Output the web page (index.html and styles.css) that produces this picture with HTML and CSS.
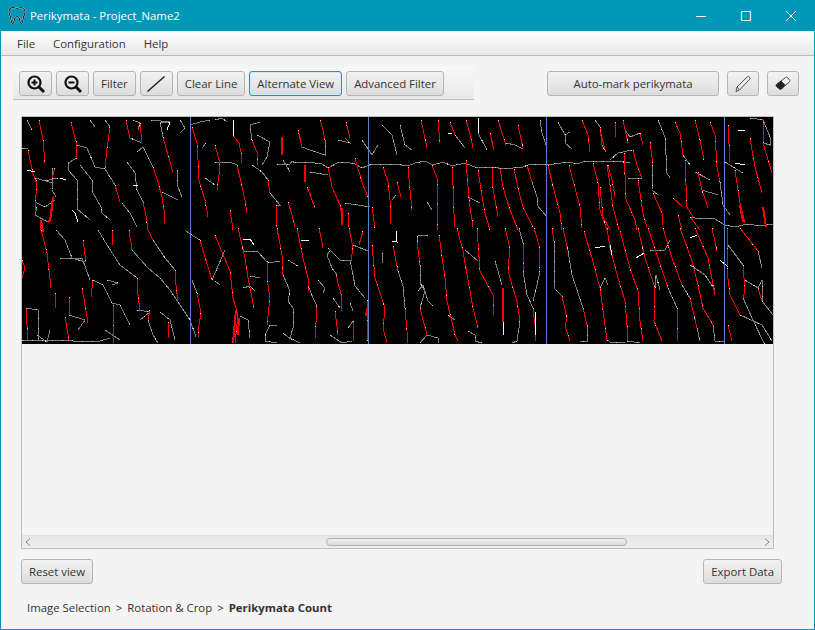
FILE: index.html
```html
<!doctype html>
<html lang="en">
  <head>
    <meta charset="UTF-8" />
    <title>Perikymata - Project_Name2</title>
    <link rel="stylesheet" href="styles.css">
  </head>
  <body>
    <div class="window">
      <header class="titlebar">
        <svg class="tooth" width="18" height="19" viewBox="0 0 18 19">
          <path d="M5 1.500C2.500 1.500 1 3.500 1 6c0 2.500 1.300 3.500 1.700 6 .4 2.500.8 5.500 2 5.500 1.500 0 1.300-2.500 1.800-4.500.4-1.500 1-2.500 2.500-2.500s2.100 1 2.500 2.500c.5 2 .3 4.500 1.800 4.500 1.200 0 1.600-3 2-5.500.4-2.500 1.700-3.500 1.700-6 0-2.500-1.500-4.500-4-4.500-1.600 0-2.600.9-4 .9S6.600 1.500 5 1.500z" />
        </svg>
        <span class="title">Perikymata - Project_Name2</span>
        <div class="controls">
          <div class="control"><svg width="12" height="12" viewBox="0 0 12 12"><path d="M1 6.500h10" /></svg></div>
          <div class="control"><svg width="12" height="12" viewBox="0 0 12 12"><path d="M1.500 1.500h9v9h-9z" /></svg></div>
          <div class="control"><svg width="12" height="12" viewBox="0 0 12 12"><path d="M1 1l10 10M11 1L1 11" /></svg></div>
        </div>
      </header>

      <nav class="menubar">
        <span class="menu">File</span>
        <span class="menu">Configuration</span>
        <span class="menu">Help</span>
      </nav>

      <section class="tools">
        <div class="toolbar">
          <button class="btn btn-icon">
            <svg class="glass" width="20" height="20" viewBox="0 0 20 20">
              <circle cx="8.500" cy="8.500" r="6" />
              <path class="handle" d="M13 13l5 5" />
              <path class="sign" d="M5.500 8.500h6M8.500 5.500v6" />
            </svg>
          </button>
          <button class="btn btn-icon">
            <svg class="glass" width="20" height="20" viewBox="0 0 20 20">
              <circle cx="8.500" cy="8.500" r="6" />
              <path class="handle" d="M13 13l5 5" />
              <path class="sign" d="M5.500 8.500h6" />
            </svg>
          </button>
          <button class="btn">Filter</button>
          <button class="btn btn-icon">
            <svg class="line-icon" width="20" height="18" viewBox="0 0 20 18"><path d="M1.500 16.500L18.500 1.500" /></svg>
          </button>
          <button class="btn">Clear Line</button>
          <button class="btn btn-focus">Alternate View</button>
          <button class="btn">Advanced Filter</button>
        </div>
        <div class="marking">
          <button class="btn btn-wide">Auto-mark perikymata</button>
          <button class="btn btn-tool">
            <svg class="pen" width="18" height="18" viewBox="0 0 18 18">
              <path d="M2 16.500l1-4.500L13 2c.8-.8 2-.8 2.500 0s.8 1.700 0 2.500L5.500 15z" />
              <path d="M3 12l2.500 3" />
            </svg>
          </button>
          <button class="btn btn-tool">
            <svg width="18" height="18" viewBox="0 0 18 18">
              <path class="rubber-top" d="M7 6l4.500-3.500c.7-.5 1.500-.5 2 0l2 2.500c.5.600.4 1.400-.2 1.900L11 10.500z" />
              <path class="rubber-low" d="M7 6l4 4.500L7.500 14c-.6.500-1.400.5-2 0L2.500 11.500c-.6-.6-.6-1.400 0-2z" />
            </svg>
          </button>
        </div>
      </section>

      <section class="viewer">
        <svg class="tracing" width="751" height="227" viewBox="22 117 751 227">
          <rect x="22" y="117" width="751" height="227" fill="#000" />
          <!-- filtered lines -->
          <g class="gray">
            <path id="gray-lines" d="
              M77 145 87 148 95 167 105 169 115 185
              M77 158 68 163 68 170 77 180 78 210 82 213 90 220
              M80 165 92 180 93 193 101 207 102 213 110 220
              M122 203 130 213 137 227
              M127 162 135 173 137 190 143 202
              M142 143 130 138
              M137 152 143 147 153 167
              M162 192 172 197 178 200
              M177 170 178 187 182 197
              M27 120 32 130
              M35 178 46 181 52 183
              M35 202 45 207 55 200
              M22 148 28 149
              M53 168 52 190 56 197
              M37 207 35 215 48 222
              M58 178 44 181
              M90 120 95 127
              M105 120 110 127
              M133 120 140 123 138 130
              M151 120 170 122 160 122 163 137
              M180 120 185 128 180 133
              M190 125 200 122 210 120
              M206 143 202 148
              M205 178 215 185
              M56 230 65 240 72 258 85 262
              M60 258 82 258 90 280
              M98 230 107 245 120 265 137 278
              M132 250 148 268 160 278 170 290 178 302
              M153 240 165 258 175 270
              M93 280 103 285 112 303 120 305 130 325
              M107 280 118 283 112 285
              M26 308 38 310 38 340
              M22 340 60 340 85 342 100 341 110 338
              M37 335 47 342 50 330
              M137 310 150 312 140 320
              M148 320 153 335 158 343
              M69 315 85 320 78 330
              M105 330 120 340
              M160 312 170 320 175 340
              M178 302 190 320 196 337
              M197 293 192 280
              M200 240 190 234 185 230
              M212 280 225 250
              M215 120 222 118 227 122
              M252 140 250 125 260 122
              M257 135 270 142 267 157 262 165
              M298 130 302 147 310 150 325 155 325 140
              M338 140 350 143 345 138
              M362 140 372 155 378 145
              M382 125 392 135 397 155
              M400 125 405 145 412 150
              M277 165 284 164 290 164 292 161 295 163 305 162 315 163 322 164 328 168 337 163 345 162 355 164 362 168 372 164 382 165 395 164 408 166 415 163 425 161 433 165 443 162 452 166 465 163 477 168 492 167 505 169 513 168 523 167 528 165 540 164 547 165 568 162 578 164 585 161 600 162 617 161 630 163
              M215 162 230 162 237 165
              M252 165 262 172 268 180
              M270 193 280 205 276 205
              M283 160 290 172
              M310 172 328 175
              M345 203 370 207
              M427 202 432 210
              M396 195 392 200
              M487 150 478 133
              M455 135 465 148
              M506 143 515 145 523 149
              M540 120 542 133 547 148
              M558 122 565 135 565 143 572 149
              M565 135 570 132
              M595 120 600 127 602 145 606 152
              M532 182 537 197 537 205 547 217
              M468 197 480 203
              M640 133 630 137 625 130
              M632 150 618 153 610 160
              M658 120 665 137 667 173 670 178
              M653 165 652 190 658 195
              M683 155 690 165
              M690 217 700 219 713 218 725 225 735 227 747 224 760 226 773 224
              M725 162 733 167 743 173
              M750 118 763 120 770 137 770 145 763 143
              M720 182 723 205 730 215
              M710 180 695 172
              M702 190 718 195
              M628 178 642 178
              M243 251 257 251 268 263 280 261
              M283 275 290 291 288 301 293 308 293 328 290 338 300 343
              M308 285 313 298 317 306
              M330 251 327 255 332 268 337 275
              M318 280 325 288 323 293
              M288 260 298 266
              M328 248 340 260 350 260 353 275 355 286 365 298
              M398 271 403 286 405 308
              M420 265 420 283 425 291 420 308
              M418 291 423 285 428 301 433 306
              M265 335 270 325 277 326
              M265 335 265 341 277 343
              M283 333 292 340
              M330 335 342 343 352 341
              M420 343 427 335 438 338 438 343
              M465 250 478 261
              M428 235 418 236 417 241
              M243 288 250 286 255 291
              M250 276 260 278
              M240 316 248 320 250 338
              M215 281 220 285
              M353 245 368 251
              M333 298 340 308
              M350 303 353 311
              M348 328 353 321
              M468 331 475 335 475 341 482 343
              M382 253 383 263
              M448 315 455 320
              M495 261 502 285
              M519 228 523 243
              M523 271 527 295 533 308
              M540 271 537 285 533 301
              M554 241 554 288 562 296
              M568 251 572 275 583 308
              M600 288 605 278 608 285
              M587 325 588 341 580 342
              M607 340 612 343 625 342
              M627 341 640 343
              M655 288 656 275 660 290
              M668 288 677 308
              M650 250 665 250 670 240
              M682 285 690 298
              M690 265 705 275 715 290
              M697 328 700 341
              M713 325 715 341 725 342
              M728 245 743 265
              M740 315 762 325 772 341
              M743 298 752 318 765 345
              M758 251 762 268
              M762 301 773 315
              M745 280 758 288 762 280 762 301
              M520 321 517 341 512 343
            " />
          </g>
          <use class="gray-speck" href="#gray-lines" />
          <!-- auto-marked lines -->
          <g class="red">
            <path id="red-lines" d="
              M39 120 41 130 43 140 44 152 44 163
              M28 150 30 160 33 173 36 182 37 190
              M71 122 74 134 77 145 76 157
              M110 127 107 148 105 168
              M126 120 128 130 130 138
              M140 123 142 143
              M163 137 168 155 173 172
              M192 127 197 143 198 160 198 177 205 200 208 217
              M143 202 146 216 148 230 153 240
              M153 167 158 182 162 197 164 210 165 223
              M115 185 120 202
              M37 180 36 195 35 210
              M55 168 52 178
              M53 208 48 223
              M40 220 40 230
              M41 230 44 241 47 253 49 270 51 288
              M83 240 86 262
              M112 230 113 245
              M129 230 132 250
              M93 280 91 297
              M82 288 85 305 88 323
              M55 293 56 308
              M69 297 70 315
              M65 317 69 340
              M26 308 27 325 28 340
              M113 305 113 325 114 343
              M137 278 138 295 140 310
              M150 310 148 320
              M175 270 176 285 178 302
              M169 322 168 338
              M200 240 204 254 208 267 212 280
              M197 293 201 313 199 325 198 337
              M22 260 25 268 22 278
              M233 135 239 143 241 152 242 163
              M252 140 257 152 257 165
              M298 130 302 147
              M320 120 323 130 325 140
              M346 122 350 138
              M215 145 220 163 219 175 217 190
              M237 165 241 182 245 200 247 213
              M230 210 233 230
              M268 180 270 193
              M276 205 276 227
              M288 202 292 215 295 227
              M307 187 311 197 315 208
              M328 167 332 187 340 205 343 223
              M355 158 359 172 363 185 368 197
              M372 207 375 228
              M383 167 388 182 390 200 390 223
              M397 182 401 197
              M408 167 410 190 412 210
              M348 213 348 227
              M421 120 424 134 427 148
              M438 120 440 143
              M450 122 455 135
              M466 120 470 134 473 148
              M490 133 494 150
              M498 120 502 133 506 145
              M518 125 523 148
              M582 120 588 135 590 152
              M600 127 602 145
              M432 165 437 178 437 195 437 210 438 230
              M452 167 453 185 453 200 455 227
              M466 160 468 187 470 207 473 227
              M478 170 481 190 485 213 490 230
              M492 167 493 188 498 217
              M500 168 503 187 510 210 518 230
              M514 169 518 188 523 207 533 227
              M527 165 532 182
              M548 165 554 190 560 213 562 230
              M569 165 575 188 580 207 582 228
              M593 163 598 183 600 210 607 230
              M608 165 612 180 615 197
              M600 130 605 150
              M615 122 616 137
              M623 120 628 143
              M640 133 643 145
              M650 142 653 165
              M633 150 637 165 642 178
              M607 165 610 185 613 207 619 230
              M624 153 625 175 625 197 635 220 637 230
              M638 180 643 213 647 227
              M673 198 683 207
              M685 160 686 185 687 207 693 217
              M675 122 680 133 683 155
              M695 120 700 140 704 160
              M710 122 715 135 717 167 720 182
              M698 172 702 190 708 208
              M728 125 730 162
              M750 138 755 167 762 193
              M763 122 763 143 772 173
              M735 170 740 203 745 223
              M600 187 603 217 610 230
              M653 193 662 213 663 225
              M678 215 682 230
              M690 217 700 230
              M215 235 222 252 230 271 233 298 238 315 235 343
              M238 228 245 258 248 278 254 308
              M277 228 282 255 283 275
              M267 261 268 285 270 298 267 325
              M297 228 303 258 308 278 309 291
              M319 228 323 248
              M317 306 315 338
              M336 275 342 298 341 311
              M335 311 338 335
              M349 228 353 248 351 261
              M353 321 353 341
              M363 231 359 245
              M368 300 367 315 368 341
              M372 245 375 278 385 308 383 328 387 343
              M393 246 398 271
              M405 308 408 343
              M417 241 420 265
              M420 308 427 335
              M439 235 445 278 447 301 455 335 458 341
              M457 228 463 251 468 280 473 308 478 328
              M477 228 480 271 493 295 493 315
              M505 228 510 248 508 270 512 285 517 301 520 321
              M534 228 539 245 540 271
              M523 243 523 271
              M533 308 535 325 536 341
              M552 228 554 241
              M562 296 567 318 565 326 570 341
              M563 228 568 251
              M583 308 587 325
              M584 231 592 258 600 288 605 325 607 340
              M607 228 610 248 618 278 625 301 627 325 627 341
              M620 231 630 268 638 291 640 321 643 341
              M638 228 645 258 655 288 654 321 662 341
              M648 228 658 258 668 288
              M677 308 677 341
              M663 228 672 258 682 285
              M690 298 697 328
              M680 228 692 261 698 285 703 308 713 325
              M695 228 708 258 715 295
              M712 228 717 251
              M727 228 727 271 730 295 740 315
              M743 265 745 291 743 298
              M740 228 758 251
              M758 288 762 301
              M728 325 732 341
            " />
          </g>
          <use class="red-speck" href="#red-lines" />
          <path class="red-thick" d="
            M53 197 50 222
            M282 137 282 155
            M305 165 305 182
            M342 208 342 225
            M41 220 43 232
            M236 310 233 343
            M239 318 238 335
            M503 288 503 322
            M368 305 366 316
            M763 207 766 227
            M740 205 743 222
          " />
          <!-- bright specks -->
          <path class="white" d="
            M233 120 233 135
            M478 118 478 133
            M133 185 138 186
            M72 210 75 213 78 222
            M301 240 309 240
            M243 239 250 239 254 245
            M396 231 397 242 392 241
            M503 322 503 335
            M535 312 536 335
            M610 245 612 255
            M636 258 644 253
            M595 248 605 246
            M735 163 745 165
            M690 238 697 235
            M738 130 745 131
            M27 170 35 172
            M60 178 66 180
            M448 133 452 133
            M720 260 728 267
            M170 122 167 130
          " />
          <!-- grid lines -->
          <path class="grid" d="M190.500 117V344M368.500 117V344M546.500 117V344M724.500 117V344" />
        </svg>
        <div class="canvas-rest"></div>
        <div class="scrollbar">
          <svg class="arrow" width="6" height="8" viewBox="0 0 6 8"><path d="M5 .5L1 4l4 3.500" /></svg>
          <div class="track"><div class="thumb"></div></div>
          <svg class="arrow" width="6" height="8" viewBox="0 0 6 8"><path d="M1 .5L5 4 1 7.500" /></svg>
        </div>
      </section>

      <section class="actions">
        <button class="btn">Reset view</button>
        <button class="btn">Export Data</button>
      </section>

      <footer class="crumbs">
        <span>Image Selection</span><span class="sep">&gt;</span><span>Rotation &amp; Crop</span><span class="sep">&gt;</span><strong>Perikymata Count</strong>
      </footer>
    </div>
  </body>
</html>
```

FILE: styles.css
```css
* {
  box-sizing: border-box;
  margin: 0;
  padding: 0;
}
body {
  font-family: 'Open Sans', 'Noto Sans', sans-serif;
  font-size: 11.4px;
  color: #333;
  overflow: hidden;
}
.window {
  width: 815px;
  height: 630px;
  display: flex;
  flex-direction: column;
  background: #f4f4f4;
  border: 1px solid #0097b9;
  border-top: 0;
}

/* title bar */
.titlebar {
  height: 31px;
  flex: none;
  display: flex;
  align-items: center;
  padding-left: 7px;
  background: #0097b9;
  color: #fff;
}
.tooth {
  fill: none;
  stroke: #02222a;
  stroke-width: 1.2;
  filter: drop-shadow(0 0 0.5px #fff) drop-shadow(0 0 0.5px #fff);
}
.title {
  margin-left: 4px;
}
.controls {
  display: flex;
  margin-left: auto;
  margin-right: 1px;
}
.control {
  width: 45px;
  height: 31px;
  display: flex;
  align-items: center;
  justify-content: center;
}
.control svg {
  fill: none;
  stroke: #fff;
  stroke-width: 1;
}

/* menu */
.menubar {
  height: 25px;
  flex: none;
  display: flex;
  align-items: center;
  gap: 18px;
  padding-left: 16px;
  background: linear-gradient(#fff, #e8e8e8);
  border-bottom: 1px solid #b9b9b9;
}

/* tools row */
.tools {
  flex: none;
  display: flex;
  justify-content: space-between;
  align-items: flex-start;
  padding: 10px 15px 0 12px;
}
.toolbar {
  display: flex;
  gap: 4px;
  width: 461px;
  height: 34px;
  padding: 5px 6px 0;
  background: linear-gradient(#f8f8f8, #e9e9e9);
  border-bottom: 1px solid #c4c4c4;
}
.marking {
  display: flex;
  gap: 8px;
  margin-top: 5px;
}
.btn {
  height: 25px;
  padding: 0 7px;
  font: inherit;
  color: #333;
  background: linear-gradient(#f3f3f3, #dcdcdc);
  border: 1px solid #b5b5b5;
  border-radius: 3px;
  display: flex;
  align-items: center;
  justify-content: center;
}
.btn-icon {
  width: 33px;
  padding: 0;
}
.btn-tool {
  width: 32px;
  padding: 0;
}
.btn-wide {
  width: 172px;
}
.btn-focus {
  border-color: #039ed3;
  box-shadow: inset 0 0 0 1px #cfeaf6;
}
.glass circle {
  fill: none;
  stroke: #111;
  stroke-width: 2.2;
}
.glass .handle {
  stroke: #111;
  stroke-width: 3;
}
.glass .sign {
  stroke: #111;
  stroke-width: 2;
}
.line-icon path {
  stroke: #222;
  stroke-width: 1.5;
}
.pen path {
  fill: none;
  stroke: #555;
  stroke-width: 1;
}
.rubber-top {
  fill: #f0f0f0;
  stroke: #444;
  stroke-width: 1;
}
.rubber-low {
  fill: #222;
  stroke: #222;
  stroke-width: 1;
}

/* image viewer */
.viewer {
  flex: none;
  display: flex;
  flex-direction: column;
  width: 753px;
  height: 433px;
  margin: 16px 0 0 20px;
  border: 1px solid #bdbdbd;
}
.tracing {
  display: block;
  flex: none;
  shape-rendering: crispEdges;
  fill: none;
}
.gray {
  stroke: #7c7c7c;
  stroke-width: 1;
}
.gray-speck {
  stroke: #d4d4d4;
  stroke-width: 1;
  stroke-dasharray: 1 9;
}
.red {
  stroke: #ff0000;
  stroke-width: 1;
}
.red-speck {
  stroke: #ffd0d0;
  stroke-width: 1;
  stroke-dasharray: 1 19;
}
.red-thick {
  stroke: #f00;
  stroke-width: 2;
}
.white {
  stroke: #fff;
  stroke-width: 1;
}
.grid {
  stroke: #5b82c8;
  stroke-width: 1;
}
.canvas-rest {
  flex: 1;
}
.scrollbar {
  height: 13px;
  flex: none;
  display: flex;
  align-items: center;
  padding: 0 3px;
  background: linear-gradient(#e6e6e6, #efefef);
  border-top: 1px solid #e2e2e2;
}
.arrow {
  flex: none;
  fill: none;
  stroke: #8a8a8a;
  stroke-width: 1;
}
.track {
  flex: 1;
  padding-left: 295px;
}
.thumb {
  width: 301px;
  height: 8px;
  background: linear-gradient(#f2f2f2, #dadada);
  border: 1px solid #b0b0b0;
  border-radius: 4px;
}

/* bottom */
.actions {
  flex: none;
  display: flex;
  justify-content: space-between;
  margin-top: 10px;
  padding: 0 32px 0 20px;
}
.crumbs {
  flex: none;
  display: flex;
  margin-top: 15px;
  padding-left: 26px;
  line-height: 17px;
}
.sep {
  margin: 0 5px;
}
```
